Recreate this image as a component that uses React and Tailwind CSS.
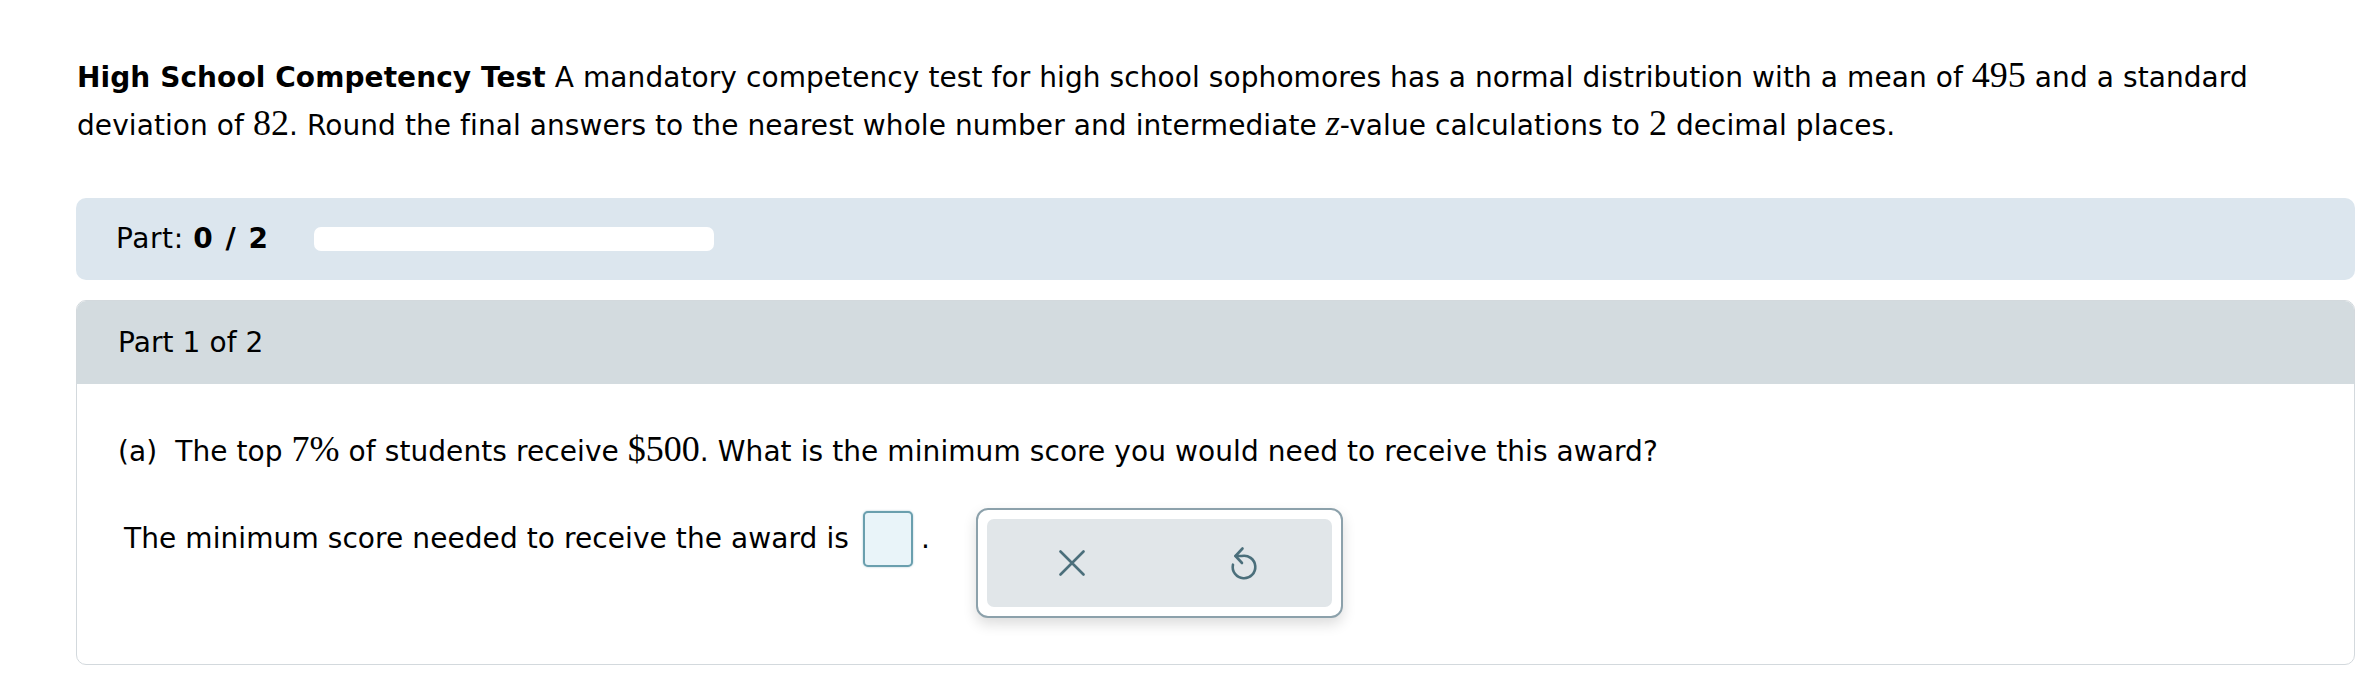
import React from "react";

function M({ children, italic }) {
  return (
    <span
      className={
        "font-['Liberation_Serif',serif] text-[36px] leading-none tracking-normal" +
        (italic ? " italic" : "")
      }
    >
      {children}
    </span>
  );
}

function XIcon() {
  return (
    <svg width="26" height="26" viewBox="0 0 26 26" fill="none">
      <path
        d="M1.5 1.5 L24.5 24.5 M24.5 1.5 L1.5 24.5"
        stroke="#4b6f7b"
        strokeWidth="2.6"
        strokeLinecap="round"
      />
    </svg>
  );
}

function UndoIcon() {
  return (
    <svg width="32" height="36" viewBox="0 0 32 36" fill="none">
      <path
        d="M7.5 11 L13.46 11 A11.3 11.3 0 1 1 4.95 19.65"
        stroke="#4b6f7b"
        strokeWidth="2.6"
        strokeLinecap="round"
        strokeLinejoin="round"
      />
      <path
        d="M14.5 3.5 L7.5 11 L14 18"
        stroke="#4b6f7b"
        strokeWidth="2.6"
        strokeLinecap="round"
        strokeLinejoin="round"
      />
    </svg>
  );
}

export default function App() {
  return (
    <div className="min-h-[688px] w-full bg-white pt-[54px] pl-[76px] pr-[15px] font-['DejaVu_Sans',Verdana,sans-serif] text-[28px] tracking-[0.08px] text-black">
      <p className="pl-px leading-[48px]">
        <b>High School Competency Test</b> A mandatory competency test for high
        school sophomores has a normal distribution with a mean of <M>495</M>{" "}
        and a standard
        <br />
        deviation of <M>82</M>. Round the final answers to the nearest whole
        number and intermediate <M italic>z</M>-value calculations to <M>2</M>{" "}
        decimal places.
      </p>

      <div className="mt-[48px] flex h-[82px] items-center rounded-[10px] bg-[#dce6ee] pl-[40px]">
        <div className="w-[198px] shrink-0 tracking-[0.6px]">
          Part: <b className="tracking-[1.5px]">0 / 2</b>
        </div>
        <div className="h-[24px] w-[400px] rounded-[7px] bg-white" />
      </div>

      <div className="mt-[20px] overflow-hidden rounded-[10px] border border-[#d3d9dd]">
        <div className="flex h-[83px] items-center bg-[#d3dbdf] pl-[41px]">
          Part 1 of 2
        </div>
        <div className="pl-[41px] pt-[47px] pb-[46px]">
          <div className="leading-[40px]">
            (a)&nbsp; The top <M>7%</M> of students receive <M>$500</M>. What is
            the minimum score you would need to receive this award?
          </div>
          <div className="mt-[36px] flex items-start pl-[6px]">
            <div className="mt-[3px] flex h-[56px] items-center">
              <span>The minimum score needed to receive the award is</span>
              <div className="ml-[14px] h-[56px] w-[50px] rounded-[5px] border-2 border-[#6a9fae] bg-[#e9f4f9] shadow-[0_0_2px_rgba(80,140,160,0.5)]" />
              <span className="ml-[8px]">.</span>
            </div>
            <div className="ml-[46px] h-[110px] w-[367px] rounded-[12px] border-2 border-[#8ca1ab] bg-white p-[9px] shadow-[0_6px_14px_rgba(0,0,0,0.14)]">
              <div className="flex h-full items-center justify-around rounded-[7px] bg-[#e1e6e9]">
                <XIcon />
                <UndoIcon />
              </div>
            </div>
          </div>
        </div>
      </div>
    </div>
  );
}
